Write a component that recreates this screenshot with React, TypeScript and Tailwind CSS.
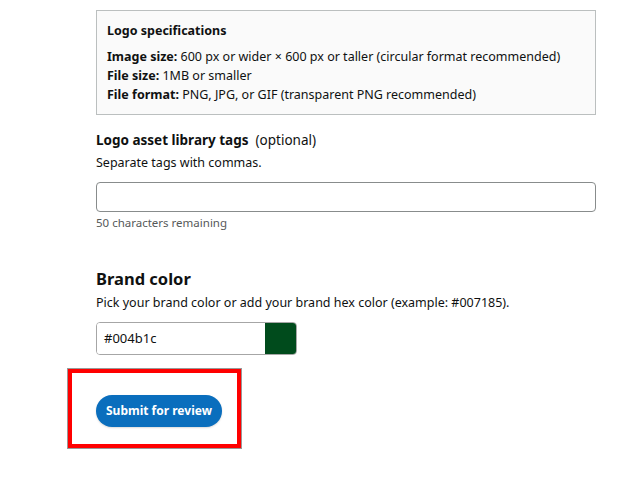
import React from "react";

export default function App() {
  return (
    <div
      className="w-[628px] h-[489px] bg-white text-[#0f1111] overflow-hidden"
      style={{ fontFamily: '"Noto Sans", "Liberation Sans", sans-serif' }}
    >
      <div className="pl-[96px] pr-[32px] pt-[10px]">
        <div className="border border-[#bbbfbf] bg-[#fafafa] px-[10px] pt-[11px] pb-[10px]">
          <div className="text-[12.5px] font-bold leading-[18px]">Logo specifications</div>
          <div className="mt-[7px] text-[12.5px] leading-[19px]">
            <div>
              <span className="font-bold">Image size:</span> 600 px or wider × 600 px or taller (circular format recommended)
            </div>
            <div>
              <span className="font-bold">File size:</span> 1MB or smaller
            </div>
            <div>
              <span className="font-bold">File format:</span> PNG, JPG, or GIF (transparent PNG recommended)
            </div>
          </div>
        </div>

        <div className="mt-[15px] text-[13.5px] leading-[20px]">
          <span className="font-bold">Logo asset library tags</span>
          <span>&nbsp; (optional)</span>
        </div>
        <div className="mt-[4px] text-[12.5px] leading-[18px]">Separate tags with commas.</div>
        <div className="mt-[10px] h-[30px] rounded-[4px] border border-[#888c8c] bg-white"></div>
        <div className="mt-[3px] text-[11.5px] leading-[16px] text-[#565959]">50 characters remaining</div>

        <div className="mt-[36px] text-[16.5px] font-bold leading-[24px]">Brand color</div>
        <div className="mt-[3px] text-[12.5px] leading-[18px]">
          Pick your brand color or add your brand hex color (example: #007185).
        </div>
        <div className="mt-[10px] flex h-[33px] w-[201px] overflow-hidden rounded-[4px] border border-[#a6a6a6]">
          <div className="flex flex-1 items-center pl-[7px] text-[13px] bg-white">#004b1c</div>
          <div className="w-[31px] bg-[#004b1c]"></div>
        </div>
      </div>

      <div className="ml-[68px] mt-[14px] h-[79px] w-[173px] border-[4px] border-[#ff0000] outline outline-1 outline-[#999] flex items-center pl-[24px] pt-[5px]">
        <button className="h-[32px] rounded-full bg-[#0a6ebd] px-[10px] text-[12px] font-bold text-white shadow-[0_1px_2px_rgba(0,0,0,0.15)]">
          Submit for review
        </button>
      </div>
    </div>
  );
}
